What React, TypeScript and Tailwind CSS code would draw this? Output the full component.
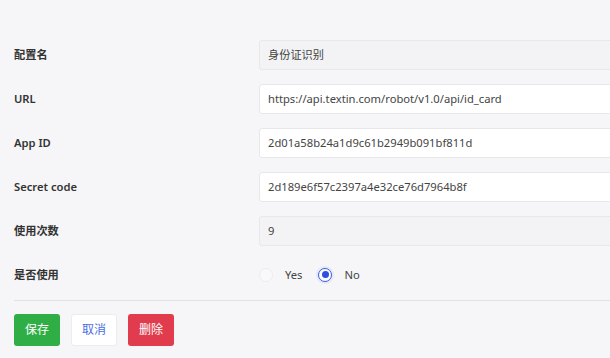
const rows = [
  { label: "配置名", value: "身份证识别", disabled: true },
  { label: "URL", value: "https://api.textin.com/robot/v1.0/api/id_card" },
  { label: "App ID", value: "2d01a58b24a1d9c61b2949b091bf811d" },
  { label: "Secret code", value: "2d189e6f57c2397a4e32ce76d7964b8f" },
  { label: "使用次数", value: "9", disabled: true },
];

export default function App() {
  return (
    <div
      className="w-[610px] h-[358px] overflow-hidden bg-[#f6f6f8] text-[#333]"
      style={{ fontFamily: '"Noto Sans", "Noto Sans CJK SC", sans-serif' }}
    >
      <div className="w-[660px] pl-[14px] pt-[40px] flex flex-col">
        <div className="flex flex-col gap-[14px]">
          {rows.map((row) => (
            <div key={row.label} className="flex items-center h-[30px]">
              <div className="w-[245px] text-[11.2px] font-semibold text-[#333]">{row.label}</div>
              <div
                className={`flex-1 h-[30px] flex items-center px-[8px] rounded-[3px] border border-[#e8e8eb] text-[11.2px] text-[#444] ${
                  row.disabled ? "bg-[#f3f3f5]" : "bg-white"
                }`}
              >
                {row.value}
              </div>
            </div>
          ))}
          <div className="flex items-center h-[30px]">
            <div className="w-[245px] text-[11.2px] font-semibold text-[#333]">是否使用</div>
            <div className="flex items-center text-[11.2px] text-[#444]">
              <span className="w-[14px] h-[14px] rounded-full border border-[#ededf0] bg-[#f9f9fa]" />
              <span className="ml-[12px]">Yes</span>
              <span className="ml-[16px] w-[14px] h-[14px] rounded-full border border-[#3b5bdb] bg-white flex items-center justify-center shadow-[0_0_0_2px_#e3e8fb]">
                <span className="w-[7px] h-[7px] rounded-full bg-[#2f4fe0]" />
              </span>
              <span className="ml-[12px]">No</span>
            </div>
          </div>
        </div>
        <div className="mt-[10px] border-t border-[#e2e2e5]" />
        <div className="mt-[13px] flex gap-[11px] text-[12px]">
          <button className="w-[46px] h-[32px] rounded-[3px] bg-[#2fae45] text-white">保存</button>
          <button className="w-[46px] h-[32px] rounded-[3px] bg-white border border-[#ececef] text-[#4a6ee0]">取消</button>
          <button className="w-[46px] h-[32px] rounded-[3px] bg-[#e03c4d] text-white">删除</button>
        </div>
      </div>
    </div>
  );
}
